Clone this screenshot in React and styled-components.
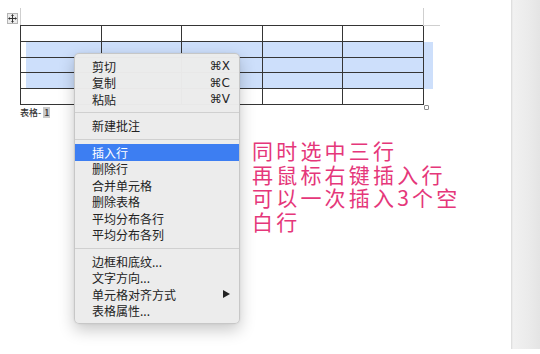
import React from "react";
import styled, { createGlobalStyle } from "styled-components";

const Global = createGlobalStyle`
  html, body { margin: 0; padding: 0; background: #ffffff; }
  body { font-family: "Noto Sans CJK SC", "Liberation Sans", sans-serif; }
`;

const Screen = styled.div`
  display: flex;
  width: 540px;
  height: 354px;
  overflow: hidden;
  background: #ffffff;
`;

const Workspace = styled.main`
  position: relative;
  flex: 1;
  padding: 25px 0 0 20px;
`;

const Scrollbar = styled.aside`
  width: 29px;
  height: 349px;
  background: linear-gradient(to right, #d9d9d9 0, #f1f1f1 2px, #ebebeb 60%, #e4e4e4 100%);
`;

const TableBlock = styled.div`
  position: relative;
  width: max-content;
`;

const Grid = styled.div`
  display: grid;
  grid-template-columns: 82px 80px 81px 80px 81px 9px;
  grid-template-rows: 17px 16px 15px 16px 16px;
`;

const SEL = "#cddffb";
const LINE = "#353535";

const Cell = styled.div`
  box-sizing: border-box;
  border-right: 1px solid ${LINE};
  border-bottom: 1px solid ${LINE};
  border-top: ${(p) => (p.$top ? `1px solid ${LINE}` : "none")};
  border-left: ${(p) => (p.$left ? `1px solid ${LINE}` : "none")};
  background: ${(p) =>
    !p.$sel ? "transparent" : p.$left ? `linear-gradient(to right, transparent 5px, ${SEL} 5px)` : SEL};
`;

const RowEnd = styled.div`
  background: ${(p) => (p.$sel ? SEL : "transparent")};
  margin-top: ${(p) => (p.$top ? "1px" : "0")};
`;

const MoveHandle = styled.div`
  position: absolute;
  left: -13px;
  top: -12px;
  width: 11px;
  height: 11px;
  box-sizing: border-box;
  border: 1px solid #b4b4b4;
  background: #ececec;
  display: flex;
  align-items: center;
  justify-content: center;
`;

const CornerV = styled.div`
  position: absolute;
  width: 1px;
  height: 17px;
  top: -17px;
  left: ${(p) => p.$x}px;
  background: #cfcfcf;
`;

const CornerH = styled.div`
  position: absolute;
  height: 1px;
  width: 17px;
  top: 0;
  left: ${(p) => p.$x}px;
  background: #cfcfcf;
`;

const ResizeHandle = styled.div`
  position: absolute;
  left: 404px;
  top: 80px;
  width: 5px;
  height: 5px;
  box-sizing: border-box;
  border: 1px solid #8c8c8c;
  border-radius: 1px;
  background: #fff;
`;

const Caption = styled.div`
  margin-top: 2px;
  font-size: 9px;
  line-height: 11px;
  font-weight: 500;
  color: #333;
  display: flex;
  align-items: center;
`;

const Field = styled.span`
  display: inline-block;
  background: #c9c9c9;
  padding: 0 1px;
  margin-left: 2px;
`;

const Menu = styled.div`
  position: absolute;
  left: 74px;
  top: 53px;
  width: 166px;
  box-sizing: border-box;
  padding: 4px 0;
  background: rgba(236, 236, 236, 0.98);
  border: 1px solid rgba(0, 0, 0, 0.16);
  border-radius: 5px;
  box-shadow: 0 6px 16px rgba(0, 0, 0, 0.22), 0 0 2px rgba(0, 0, 0, 0.08);
`;

const Item = styled.div`
  height: 16.5px;
  display: flex;
  align-items: center;
  justify-content: space-between;
  padding: 0 9px 0 17px;
  font-size: 12px;
  color: ${(p) => (p.$active ? "#ffffff" : "#222222")};
  background: ${(p) => (p.$active ? "#3d7ef2" : "transparent")};
  white-space: nowrap;
`;

const Shortcut = styled.span`
  font-family: "DejaVu Sans", "Liberation Sans", sans-serif;
  font-size: 12px;
  color: #262626;
`;

const Separator = styled.div`
  height: 10px;
  display: flex;
  align-items: center;
  &::after {
    content: "";
    flex: 1;
    height: 1px;
    background: #d0d0d0;
  }
`;

const Note = styled.div`
  position: absolute;
  left: 252px;
  top: 139px;
  display: flex;
  flex-direction: column;
  font-family: "Noto Sans CJK SC", sans-serif;
  font-size: 21px;
  letter-spacing: 3.2px;
  color: #e5377a;
  white-space: nowrap;
`;

const NoteLine = styled.div`
  height: 23.5px;
  line-height: 23.5px;
`;

const rows = [0, 1, 2, 3, 4];
const cols = [0, 1, 2, 3, 4];

const items = [
  { t: "剪切", k: "⌘X" },
  { t: "复制", k: "⌘C" },
  { t: "粘贴", k: "⌘V" },
  "sep",
  { t: "新建批注" },
  "sep",
  { t: "插入行", active: true },
  { t: "删除行" },
  { t: "合并单元格" },
  { t: "删除表格" },
  { t: "平均分布各行" },
  { t: "平均分布各列" },
  "sep",
  { t: "边框和底纹..." },
  { t: "文字方向..." },
  { t: "单元格对齐方式", sub: true },
  { t: "表格属性..." },
];

const noteLines = ["同时选中三行", "再鼠标右键插入行", "可以一次插入3个空", "白行"];

export default function App() {
  return (
    <Screen>
      <Global />
      <Workspace>
        <TableBlock>
          <CornerV $x={0} />
          <CornerV $x={403} />
          <CornerH $x={403} />
          <MoveHandle>
            <svg width="9" height="9" viewBox="0 0 9 9">
              <path d="M4.5 0.5v8M0.5 4.5h8" stroke="#333" strokeWidth="1" />
              <path d="M4.5 0.3l-1.5 1.6h3zM4.5 8.7l-1.5-1.6h3zM0.3 4.5l1.6-1.5v3zM8.7 4.5l-1.6-1.5v3z" fill="#333" />
            </svg>
          </MoveHandle>
          <Grid>
            {rows.map((r) => {
              const sel = r >= 1 && r <= 3;
              return (
                <React.Fragment key={r}>
                  {cols.map((c) => (
                    <Cell key={c} $top={r === 0} $left={c === 0} $sel={sel} />
                  ))}
                  <RowEnd $sel={sel} />
                </React.Fragment>
              );
            })}
          </Grid>
          <ResizeHandle />
          <Caption>
            表格-<Field>1</Field>
          </Caption>
        </TableBlock>

        <Menu>
          {items.map((it, i) =>
            it === "sep" ? (
              <Separator key={i} />
            ) : (
              <Item key={i} $active={it.active}>
                <span>{it.t}</span>
                {it.k && <Shortcut>{it.k}</Shortcut>}
                {it.sub && (
                  <svg width="7" height="8" viewBox="0 0 7 8">
                    <path d="M0 0L7 4L0 8z" fill="#222" />
                  </svg>
                )}
              </Item>
            )
          )}
        </Menu>

        <Note>
          {noteLines.map((l) => (
            <NoteLine key={l}>{l}</NoteLine>
          ))}
        </Note>
      </Workspace>
      <Scrollbar />
    </Screen>
  );
}
